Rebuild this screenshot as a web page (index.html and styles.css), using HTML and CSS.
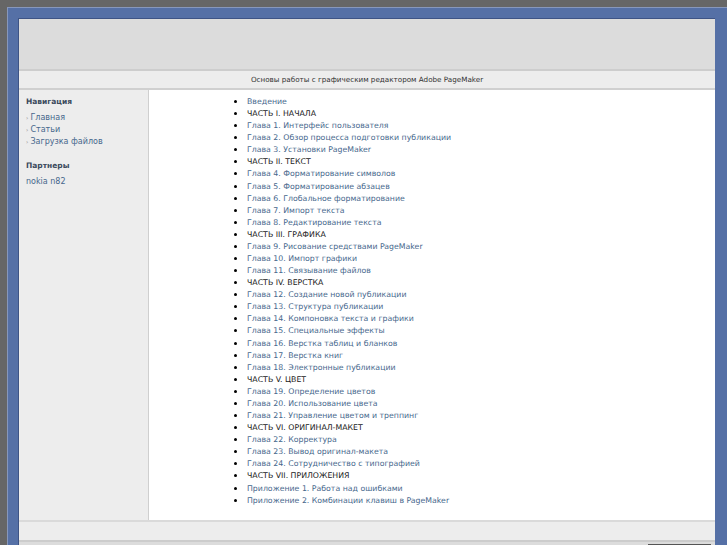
FILE: index.html
```html
<!DOCTYPE html>
<html lang="ru">
<head>
<meta charset="utf-8">
<title>Основы работы с графическим редактором Adobe PageMaker</title>
<link rel="stylesheet" href="styles.css">
</head>
<body>
<div class="frame">
  <div class="page">
    <div class="header"></div>
    <div class="titlebar">Основы работы с графическим редактором Adobe PageMaker</div>
    <div class="columns">
      <div class="sidebar">
        <h3 class="side-title">Навигация</h3>
        <ul class="side-menu">
          <li><span class="arrow">›</span><a href="#">Главная</a></li>
          <li><span class="arrow">›</span><a href="#">Статьи</a></li>
          <li><span class="arrow">›</span><a href="#">Загрузка файлов</a></li>
        </ul>
        <h3 class="side-title partners">Партнеры</h3>
        <a class="partner" href="#">nokia n82</a>
      </div>
      <div class="main">
        <ul class="toc">
          <li><a href="#">Введение</a></li>
          <li class="part">ЧАСТЬ I. НАЧАЛА</li>
          <li><a href="#">Глава 1. Интерфейс пользователя</a></li>
          <li><a href="#">Глава 2. Обзор процесса подготовки публикации</a></li>
          <li><a href="#">Глава 3. Установки PageMaker</a></li>
          <li class="part">ЧАСТЬ II. ТЕКСТ</li>
          <li><a href="#">Глава 4. Форматирование символов</a></li>
          <li><a href="#">Глава 5. Форматирование абзацев</a></li>
          <li><a href="#">Глава 6. Глобальное форматирование</a></li>
          <li><a href="#">Глава 7. Импорт текста</a></li>
          <li><a href="#">Глава 8. Редактирование текста</a></li>
          <li class="part">ЧАСТЬ III. ГРАФИКА</li>
          <li><a href="#">Глава 9. Рисование средствами PageMaker</a></li>
          <li><a href="#">Глава 10. Импорт графики</a></li>
          <li><a href="#">Глава 11. Связывание файлов</a></li>
          <li class="part">ЧАСТЬ IV. ВЕРСТКА</li>
          <li><a href="#">Глава 12. Создание новой публикации</a></li>
          <li><a href="#">Глава 13. Структура публикации</a></li>
          <li><a href="#">Глава 14. Компоновка текста и графики</a></li>
          <li><a href="#">Глава 15. Специальные эффекты</a></li>
          <li><a href="#">Глава 16. Верстка таблиц и бланков</a></li>
          <li><a href="#">Глава 17. Верстка книг</a></li>
          <li><a href="#">Глава 18. Электронные публикации</a></li>
          <li class="part">ЧАСТЬ V. ЦВЕТ</li>
          <li><a href="#">Глава 19. Определение цветов</a></li>
          <li><a href="#">Глава 20. Использование цвета</a></li>
          <li><a href="#">Глава 21. Управление цветом и треппинг</a></li>
          <li class="part">ЧАСТЬ VI. ОРИГИНАЛ-МАКЕТ</li>
          <li><a href="#">Глава 22. Корректура</a></li>
          <li><a href="#">Глава 23. Вывод оригинал-макета</a></li>
          <li><a href="#">Глава 24. Сотрудничество с типографией</a></li>
          <li class="part">ЧАСТЬ VII. ПРИЛОЖЕНИЯ</li>
          <li><a href="#">Приложение 1. Работа над ошибками</a></li>
          <li><a href="#">Приложение 2. Комбинации клавиш в PageMaker</a></li>
        </ul>
      </div>
    </div>
    <div class="footer"></div>
    <div class="bottom"><div class="copy"></div></div>
  </div>
</div>
</body>
</html>
```

FILE: styles.css
```css
html, body {
  margin: 0;
  padding: 0;
  background: #666666;
  overflow: hidden;
  height: 545px;
}
body {
  font-family: "DejaVu Sans", Verdana, sans-serif;
  font-size: 7.8px;
  color: #111;
}
a {
  color: #46678c;
  text-decoration: none;
}
.frame {
  margin: 7px 0 0 7px;
  width: 720px;
  height: 538px;
  overflow: hidden;
  box-sizing: border-box;
  background: #5570a6;
  border-top: 1px solid #8797bb;
  border-left: 1px solid #8797bb;
  padding: 10px 0 0 10px;
}
.page {
  width: 697px;
  box-sizing: border-box;
  border-top: 1px solid #3e5485;
  border-left: 1px solid #3e5485;
  background: #dcdcdc;
}
.header {
  height: 50px;
  background: #dcdcdc;
  border-bottom: 2px solid #cdcdcd;
}
.titlebar {
  height: 17px;
  line-height: 18px;
  background: #ededed;
  border-bottom: 2px solid #d0d0d0;
  text-align: center;
  color: #333;
  font-size: 7.2px;
}
.columns {
  display: flex;
  height: 430px;
  background: #fff;
}
.sidebar {
  width: 130px;
  flex: none;
  box-sizing: border-box;
  background: #ededed;
  border-right: 1px solid #cfcfcf;
  padding: 7px 0 0 7px;
  font-size: 8px;
}
.side-title {
  margin: 0;
  font-size: 7.5px;
  font-weight: bold;
  color: #3b4a5c;
  line-height: 10px;
}
.side-menu {
  list-style: none;
  margin: 5px 0 0 0;
  padding: 0;
}
.side-menu li {
  line-height: 12px;
}
.arrow {
  color: #888;
  font-size: 6px;
  margin-right: 2px;
}
.partners {
  margin-top: 13px;
}
.partner {
  display: block;
  margin-top: 6px;
  line-height: 10px;
}
.main {
  flex: 1;
  background: #fff;
  padding-top: 4px;
}
.toc {
  margin: 0;
  padding: 0 0 0 98px;
  list-style: disc;
}
.toc li {
  line-height: 12.08px;
  height: 12.08px;
  color: #222;
}
.toc li::marker {
  font-size: 10.5px;
  color: #000;
}
.footer {
  height: 18px;
  background: #ededed;
  border-top: 2px solid #dadada;
  border-bottom: 2px solid #cccccc;
}
.bottom {
  display: flex;
  justify-content: flex-end;
  background: #dcdcdc;
  height: 3px;
}
.copy {
  width: 63px;
  height: 1px;
  margin: 2px 4px 0 0;
  background: #555;
}
```
